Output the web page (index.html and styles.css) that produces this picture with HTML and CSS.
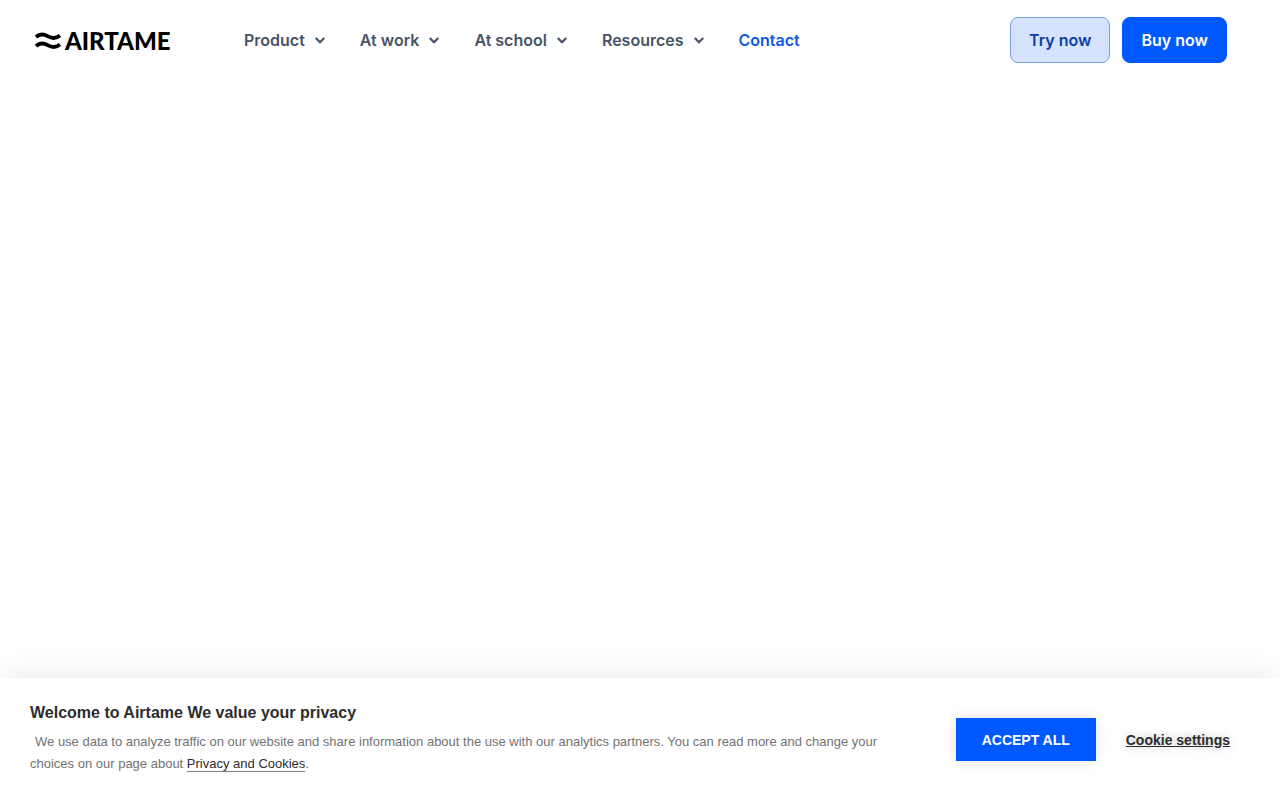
FILE: index.html
```html
<!DOCTYPE html>
<html lang="en">
<head>
<meta charset="utf-8">
<meta name="viewport" content="width=device-width, initial-scale=1">
<title>Airtame</title>
<link rel="stylesheet" href="styles.css">
</head>
<body>
<header class="header">
  <a class="logo" href="#">
    <svg class="logo-waves" viewBox="0 0 26 18" aria-hidden="true">
      <path d="M1 5C4.3 2.1 8 1.6 12.6 4.2S20.8 7 25 3.6"/>
      <path d="M1 14C4.3 11.1 8 10.6 12.6 13.2S20.8 16 25 12.6"/>
    </svg>
    <span class="logo-name">AIRTAME</span>
  </a>
  <nav class="nav">
    <button class="nav-item" type="button">Product <svg class="chevron" viewBox="0 0 10 8" aria-hidden="true"><path d="M.8 2L5 6.2 9.200 2"/></svg></button>
    <button class="nav-item" type="button">At work <svg class="chevron" viewBox="0 0 10 8" aria-hidden="true"><path d="M.8 2L5 6.2 9.200 2"/></svg></button>
    <button class="nav-item" type="button">At school <svg class="chevron" viewBox="0 0 10 8" aria-hidden="true"><path d="M.8 2L5 6.2 9.200 2"/></svg></button>
    <button class="nav-item" type="button">Resources <svg class="chevron" viewBox="0 0 10 8" aria-hidden="true"><path d="M.8 2L5 6.2 9.200 2"/></svg></button>
    <a class="nav-item nav-contact" href="#">Contact</a>
  </nav>
  <div class="actions">
    <a class="btn btn-light" href="#">Try now</a>
    <a class="btn btn-primary" href="#">Buy now</a>
  </div>
</header>
<main class="content"></main>
<section class="cookies" aria-labelledby="cookies-title">
  <div class="cookies-text">
    <h2 class="cookies-title" id="cookies-title">Welcome to Airtame We value your privacy</h2>
    <p class="cookies-body">We use data to analyze traffic on our website and share information about the use with our analytics partners. You can read more and change your choices on our page about <a class="cookies-link" href="#">Privacy and Cookies</a>.</p>
  </div>
  <div class="cookies-actions">
    <button class="accept" type="button">ACCEPT ALL</button>
    <button class="settings" type="button">Cookie settings</button>
  </div>
</section>
</body>
</html>
```
FILE: styles.css
```css
* {
  box-sizing: border-box;
}

body {
  display: flex;
  flex-direction: column;
  min-height: 100vh;
  margin: 0;
  background: #fff;
  font-family: Inter, sans-serif;
}

button {
  border: 0;
  padding: 0;
  background: none;
  font: inherit;
  cursor: pointer;
}

a {
  text-decoration: none;
}

.header {
  display: flex;
  align-items: center;
  height: 80px;
  padding: 0 53px 0 35px;
}

.logo {
  display: flex;
  flex: 0 0 209px;
  align-items: center;
  gap: 4px;
  padding-top: 2px;
  color: #000;
}

.logo-waves {
  width: 26px;
  height: 18px;
  overflow: visible;
  fill: none;
  stroke: #000;
  stroke-width: 3.8;
  stroke-linejoin: round;
}

.logo-name {
  font: 900 24px/32px Lato, sans-serif;
}

.nav {
  display: flex;
  align-items: center;
  gap: 35px;
}

.nav-item {
  display: flex;
  align-items: center;
  gap: 10px;
  color: #475467;
  font-size: 16px;
  font-weight: 600;
  line-height: 24px;
  white-space: nowrap;
}

.nav-contact {
  color: #1058e8;
}

.chevron {
  width: 10px;
  height: 8px;
  overflow: visible;
  fill: none;
  stroke: currentColor;
  stroke-width: 2.3;
}

.actions {
  display: flex;
  gap: 12px;
  margin-left: auto;
}

.btn {
  padding: 10px 18px;
  border: 1px solid #0059ff;
  border-radius: 8px;
  font-size: 16px;
  font-weight: 600;
  line-height: 24px;
  white-space: nowrap;
}

.btn-light {
  border-color: #759fe8;
  background: #d6e3ff;
  color: #0a3fa8;
}

.btn-primary {
  background: #0059ff;
  color: #fff;
}

.content {
  flex: 1;
}

.cookies {
  display: flex;
  align-items: center;
  justify-content: space-between;
  padding: 24px 50px 25px 30px;
  background: #fff;
  box-shadow: 0 0 30px rgba(0, 0, 0, 0.1);
  font-family: "Liberation Sans", sans-serif;
}

.cookies-text {
  flex: 0 1 860px;
}

.cookies-title {
  margin: 0 0 7px;
  color: #2d2d2d;
  font-size: 16px;
  line-height: 22px;
}

.cookies-body {
  margin: 0;
  color: #727272;
  font-size: 13px;
  line-height: 22px;
  text-indent: 5px;
}

.cookies-link {
  border-bottom: 1px solid #808080;
  color: #2d2d2d;
}

.cookies-actions {
  display: flex;
  align-items: center;
  gap: 30px;
  padding-top: 2px;
}

.accept {
  width: 140px;
  height: 43px;
  background: #0059ff;
  box-shadow: 0 0 12px rgba(0, 0, 0, 0.12);
  color: #fff;
  font-size: 14px;
  font-weight: 700;
}

.settings {
  color: #2d2d2d;
  font-size: 14px;
  font-weight: 700;
  text-decoration: underline;
  text-shadow: 0 0 8px rgba(0, 0, 0, 0.25);
}
```
